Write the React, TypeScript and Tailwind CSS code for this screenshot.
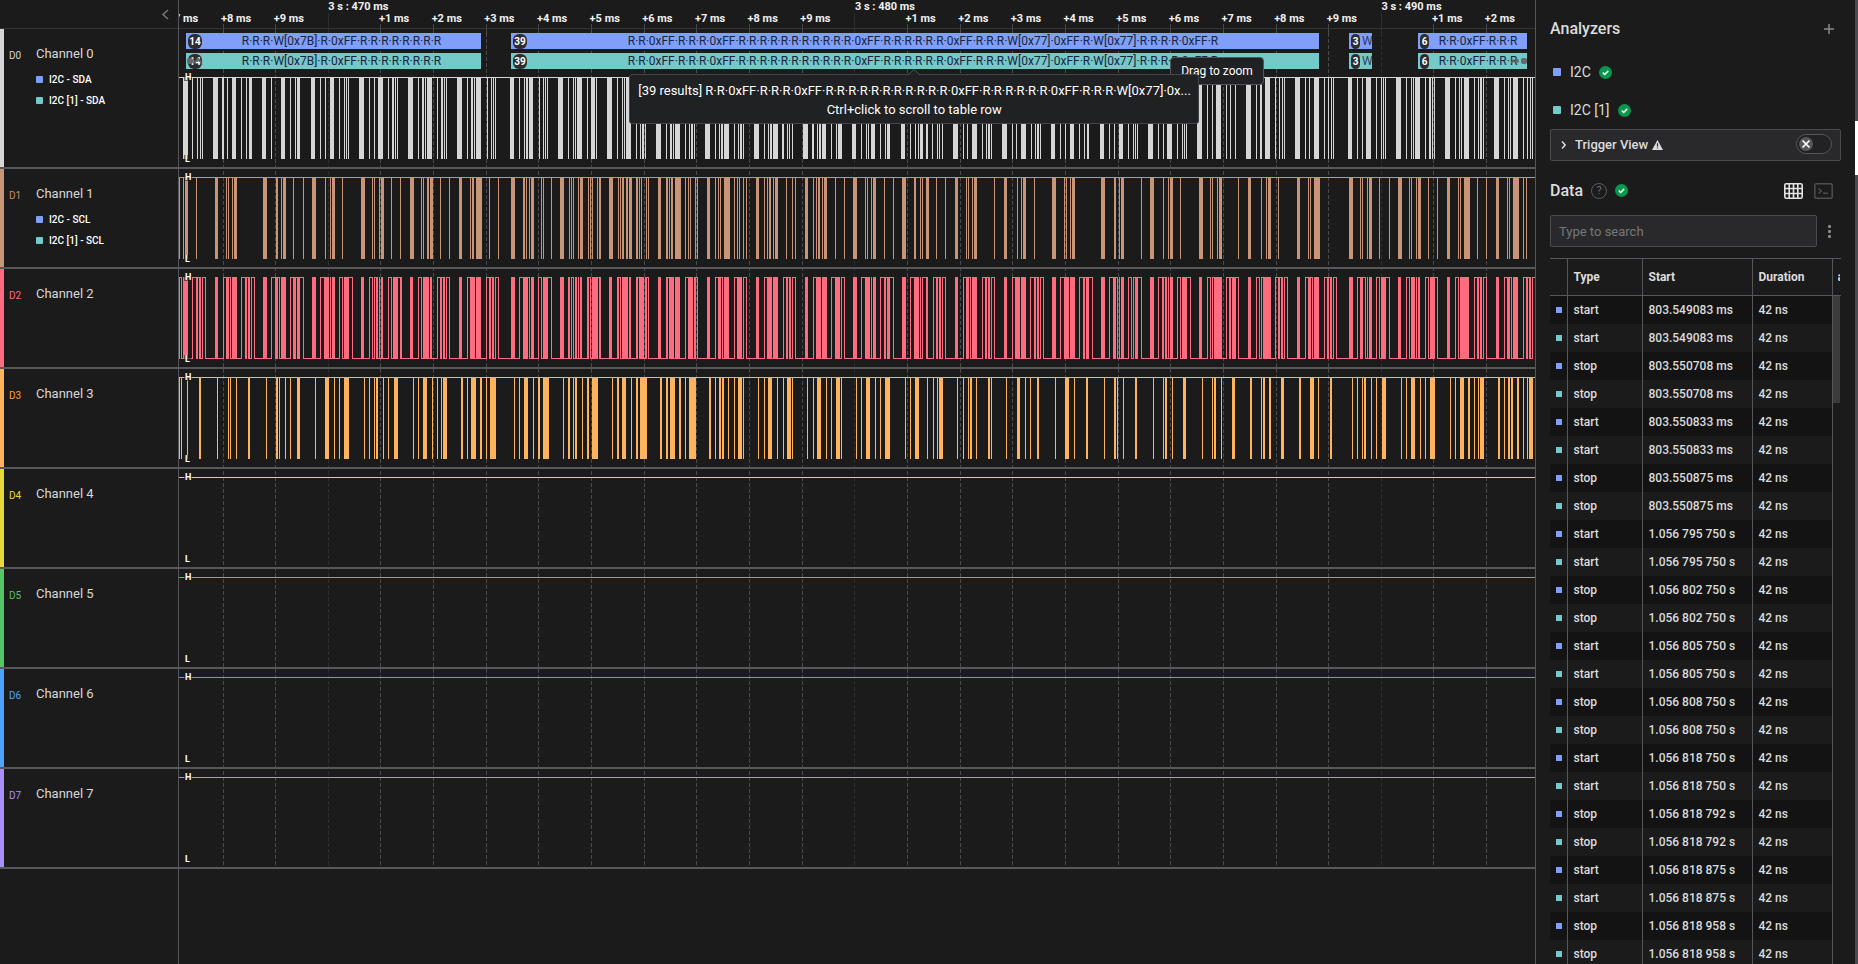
import { Fragment } from "react";
import clsx from "clsx";

// Transitions: "x" is a one pixel edge, "x*w" a burst of w pixels.
// A trailing "H" means the line stays high until the next one.
const ORIGIN = 179;
const SPAN = 1356;

const D0 =
    "183*5 192 197 200 202 213*5 222*2 227 232*4 241 246 249*3 262*4 271 281*4 290 295 297*3 311*4 320 325 330*4 339 344 346 348 359*5 369 374 378*5 388 392*2 395 397 408*5 418 422*2 425 427*5 437 441*2 444 446 457*5 467 471*2 474 476*5 487 491 493 495 510*4 519 524 526*2 529*4 539 543 545 547 558*5 568 573 575 577*5 587 591*4 596 607*5 617 622 624 626*5 636 640 642*2 645 656*5 666 670*2 673 675*5 685 689 691*2 694 705*5 715 719 721*2 724*5 734 738 740*2 743 754*5 764 768 770*2 773*5 782*2 787 789 792 803*5 812*2 817 819*2 822*4 831 836 838*4 852*4 861 866 868 871*4 880 885 887*3 901*4 910 915 918 920*3 926*2 932 937 939 942 953*5 963 967 972*5 982 986 988*2 991 1002*5 1012 1016 1021*5 1031 1035 1037*2 1040 1051*4 1060 1065 1070*4 1079 1084 1087*2 1100*4 1109 1114 1119*4 1128 1133 1135 1137 1148*5 1158 1163 1167*5 1177 1182 1184 1186 1197*5 1207 1212 1216*5 1226 1230 1235 1246*5 1256 1260*2 1265*5 1275 1279 1282 1284 1295*5 1305 1309 1314*5 1324 1328 1331 1333 1348*4 1357 1362 1366*5 1376 1381 1383 1385 1396*5 1406 1411 1413 1415*5 1425 1429*2 1432 1434 1445*5 1455 1459 1461 1464*5 1474 1478 1480*2 1483 1494*5 1504 1508 1510 1513*5 1523 1527 1530 1532";
const D1 =
    "179 183 185*3 196 215*3 226 228 232 234*3 263*4 276*2 281 283*3 293 303 312*4 325 330 332*3 342 361*4 372 374 379 381*3 391 400 410*4 421 423 427*2 430*3 440 449 459*3 470 472*2 476*6 489 498 511*4 523*2 526 529 531*3 541 543 551 560*4 569 571 573 578 580*3 588 590 592 597 599*2 609*4 618 620 622*2 626*2 629*3 636*2 639 641 646 648 658*3 666*2 669 671*2 675*6 685 688 690 695 697 707*3 715 718 720 724*6 734 737 739 743 746 756*3 764 767 769*2 773 775*3 786 792 795 805*3 813 816 818*2 822 824*3 835 844 853*4 865 867 871 873*3 884 893 902*4 914*2 920 922 926*3 936 945 955*3 966 968 972 974*3 994 1004*3 1017 1021 1023*3 1034 1052*4 1064 1066 1070 1072*3 1101*4 1114*2 1119 1121*3 1141 1150*4 1163 1168 1170*3 1180 1199*4 1210 1212 1217 1219*3 1238 1248*3 1261 1266 1268*3 1278 1297*3 1308 1310 1314*6 1349*4 1360 1362 1367 1369*3 1379 1389 1398*4 1409 1411 1416 1418*3 1428 1437 1447*3 1458 1460 1464*6 1477 1486 1496*3 1507 1509 1513*6 1523 1526";
const D2 =
    "179H 181 183*5 192H 196*2H 199*2 202H 205 215*3 223H 226*3H 230 232*5 241H 245*2H 248*2 251H 254 263*4 271H 275*3H 279 281*5 290H 293*3H 297*3H 303 312*4 320H 324*5 330 332*3 339H 342 344*5H 352 361*3 369H 372 374H 376*2 379 381*2 388H 391 393*5H 400*2 410*3 418H 421 423*6 430*2 437H 440*2H 443*2 446H 449 459*3 467H 470*5 476*5 486H 489*2H 492*2 495H 498 511*4 519H 523*5H 529 531*3 538H 541 543*5H 551 560*4 568*2 571H 573 575*2 578 580*2 587*2H 590 592*6H 599*2 609*3 617*2H 620 622*6 629*2 636*2H 639*5 645*2H 648 658*3 666*2H 669*5 675*5 685H 688*5 694*2H 697 707*3 715H 718*3H 722 724*5 734H 737*5 743H 746 756*3 764H 767*5 773*5 783H 786*2H 789*2 792H 795 805*3 813H 816*5 822*5 831H 835*5 841H 844 853*4 861H 865*5 871 873*3 880H 884*2H 887*3H 893 902*4 910H 914*5 920 922H 926*2 933H 936*2H 939*2 942H 945 955*3 963H 966*3H 970 972*5 982H 985*2H 988*2 991H 994 1004*3 1012H 1015*5 1021*5 1030H 1034*2H 1037*2 1040H 1043 1052*4 1060H 1064*5 1070*5 1079H 1083*2H 1086*3H 1092 1101*4 1109H 1113*3H 1117 1119 1121*3 1128H 1131 1133H 1135*3H 1141 1150*4 1158H 1162*2H 1165*2 1168 1170*3 1177H 1180 1182*5H 1190 1199*3 1207H 1210 1212H 1214*8 1226H 1229*2H 1232*4H 1238 1248*3 1256H 1259 1261H 1263*8 1275H 1278*2H 1281*2 1284H 1287 1297*3 1305H 1308*3H 1312 1314*5 1324H 1327*2H 1330*2 1333H 1336 1349*4 1357H 1360*3H 1365 1367 1369*3 1376H 1379 1381*5H 1389 1398*3 1406H 1409 1411*4 1416 1418*2 1425H 1428 1430*5H 1437 1447*3 1455H 1458 1460*9 1474H 1477*2H 1480*2 1483H 1486 1496*3 1504H 1507*3H 1511 1513*5 1523H 1526*2H 1529*2 1532H";
const D3 =
    "179 181 187 199*2 217 228 230 236 248*2 266 276*2 279 285 290 297*3 315 325*4 334 339 344*5 364 369 374 376*2 383 388 394*4 413 418 423*4 432 437 441 443*4 461*2 467 471*5 480*2 486 490*6 514 519 524*4 533 538*2 543*6 563 568*2 573 575*2 582 587*2 592*6 612 617*2 622*4 631 636*2 640*7 660*2 666*2 670*5 679*2 685 689*7 709*2 715 719*2 722*2 728 734 738*4 743 758 764 768*4 777 783 787*4 792 807 813 817*4 826 831 836*4 841 856 861 866*4 875 880 885*5 905 910 915*4 927 933 937 939*4 957 963 968 970*2 976 988*2 991 1006 1017*3 1025 1030 1037*2 1055 1065*4 1074 1086*2 1104 1114*2 1117 1123 1135*2 1153 1163 1165*2 1172 1183*3 1202 1212 1214*2 1221 1232*3 1250*2 1261 1263*2 1269*2 1281*3 1299*2 1310*4 1318 1330*2 1352 1357 1362 1364*2 1371 1376 1382*4 1401 1406 1411*4 1420 1425 1430*5 1450 1455 1460*4 1468*2 1474 1478 1480*4 1498*2 1504 1508*2 1511*2 1517*2 1523 1527 1529*4";

const BLUE = "bg-[#7f9ff9]";
const TEAL = "bg-[#74c9c9]";

const channels = [
    { color: "#d6d6d6", bar: "bg-[#d6d6d6]", text: "text-[#d6d6d6]", data: D0, tags: ["I2C - SDA", "I2C [1] - SDA"] },
    { color: "#c99579", bar: "bg-[#c99579]", text: "text-[#c98b66]", data: D1, tags: ["I2C - SCL", "I2C [1] - SCL"] },
    { color: "#ff6b7f", bar: "bg-[#ff6b7f]", text: "text-[#ff6b7f]", data: D2, idleLow: true },
    { color: "#ffb35c", bar: "bg-[#ffb35c]", text: "text-[#ff9d3c]", data: D3 },
    { color: "#e6da3a", bar: "bg-[#e6da3a]", text: "text-[#e6da3a]" },
    { color: "#56c568", bar: "bg-[#56c568]", text: "text-[#56c568]" },
    { color: "#4fa3ff", bar: "bg-[#4fa3ff]", text: "text-[#4fa3ff]" },
    { color: "#a98ffa", bar: "bg-[#a98ffa]", text: "text-[#a98ffa]" },
];

const TICK_START = 44;
const TICK_STEP = 52.65;
const ticks = Array.from({ length: 25 }, (_, i) => ({
    x: TICK_START + i * TICK_STEP,
    digit: (8 + i) % 10,
    major: (8 + i) % 10 === 0,
    label: `3 s : ${460 + Math.floor((8 + i) / 10) * 10} ms`,
}));

const repeat = (n: number) => Array(n).fill("R").join("·");
const LONG_HEAD = `R·R·0xFF·R·R·R·0xFF·${repeat(11)}·0xFF·${repeat(6)}·0xFF·R·R·R·W[0x77]·0x`;

const bubbles = [
    { gap: 7, width: 295, count: 14, text: `R·R·R·W[0x7B]·R·0xFF·${repeat(8)}` },
    { gap: 30, width: 808, count: 39, text: `${LONG_HEAD}FF·R·W[0x77]·R·R·R·R·0xFF·R` },
    { gap: 30, width: 23, count: 3, text: "W[0x77]", clipped: true },
    { gap: 46, width: 109, count: 6, text: "R·R·0xFF·R·R·R" },
];

const results: [string, string][] = [
    ["start", "803.549083 ms"],
    ["stop", "803.550708 ms"],
    ["start", "803.550833 ms"],
    ["stop", "803.550875 ms"],
    ["start", "1.056 795 750 s"],
    ["stop", "1.056 802 750 s"],
    ["start", "1.056 805 750 s"],
    ["stop", "1.056 808 750 s"],
    ["start", "1.056 818 750 s"],
    ["stop", "1.056 818 792 s"],
    ["start", "1.056 818 875 s"],
    ["stop", "1.056 818 958 s"],
];

const parseEdges = (data: string) =>
    data.split(" ").map((token) => {
        const [x, w] = token.replace("H", "").split("*");
        return { x: Number(x) - ORIGIN, w: Number(w ?? 1), high: token.endsWith("H") };
    });

const Waveform = ({ data, color, idleLow }: { data?: string; color: string; idleLow?: boolean }) => {
    const edges = data ? parseEdges(data) : [];
    return (
        <svg
            className="block w-full h-[82px]"
            viewBox={`0 0 ${SPAN} 82`}
            preserveAspectRatio="none"
            shapeRendering="crispEdges"
            fill={color}
            aria-hidden="true"
        >
            {!idleLow && <rect x={0} y={0} width={SPAN} height={1} />}
            {edges.map((edge, i) => {
                const end = edge.x + edge.w;
                const next = edges[i + 1]?.x ?? SPAN;
                return (
                    <Fragment key={edge.x}>
                        <rect x={edge.x} y={0} width={edge.w} height={82} />
                        {idleLow && <rect x={end} y={edge.high ? 0 : 81} width={next - end} height={1} />}
                    </Fragment>
                );
            })}
        </svg>
    );
};

const Grid = () => (
    <svg
        className="absolute inset-0 w-full h-full"
        viewBox={`0 0 ${SPAN} 869`}
        preserveAspectRatio="none"
        shapeRendering="crispEdges"
        aria-hidden="true"
    >
        {ticks.map(({ x, major }) => (
            <Fragment key={x}>
                <line x1={x} x2={x} y1={major ? 13 : 24} y2={33} stroke={major ? "#2e2e32" : "#4a4a4e"} />
                <line
                    x1={x}
                    x2={x}
                    y1={33}
                    y2={869}
                    stroke={major ? "#2e2e32" : "#4a4a4e"}
                    strokeDasharray="4 2"
                />
            </Fragment>
        ))}
    </svg>
);

const Ruler = () => (
    <div className="flex h-[29px] overflow-hidden border-b border-[#343438] text-[11px] leading-3 font-bold text-[#f0f0f0]">
        <div className="flex items-end justify-end overflow-hidden pb-[3px]" style={{ flex: `${TICK_START} 1 0px` }}>
            <span className="w-[55px] shrink-0 whitespace-nowrap">+7 ms</span>
        </div>
        {ticks.map(({ x, digit, major, label }) => (
            <div
                key={x}
                className={clsx("flex min-w-0 whitespace-nowrap", major ? "items-start pt-px" : "items-end pb-[3px]")}
                style={{ flex: `${Math.min(TICK_STEP, SPAN - x)} 1 0px` }}
            >
                <span className={major ? "" : "-ml-[2px]"}>{major ? label : `+${digit} ms`}</span>
            </div>
        ))}
    </div>
);

const BubbleRow = ({ tone }: { tone: string }) => (
    <div className="flex h-4 text-[12px] leading-4 text-[#1c2440]">
        {bubbles.map(({ gap, width, count, text, clipped }) => (
            <Fragment key={count}>
                <div style={{ flex: `${gap} 1 0px` }} />
                <div
                    className={clsx("flex min-w-0 items-center overflow-hidden", tone)}
                    style={{ flex: `${width} 1 0px` }}
                >
                    <span
                        className={clsx(
                            "ml-[2px] shrink-0 rounded-[6px] bg-[#2d2d31] text-center text-[10px] leading-[15px] font-bold text-white",
                            count > 9 ? "w-[14px]" : "w-[9px]",
                        )}
                    >
                        {count}
                    </span>
                    <span className={clsx("min-w-0 flex-1 whitespace-nowrap", clipped ? "pl-[2px] opacity-80" : "text-center")}>
                        {text}
                    </span>
                </div>
            </Fragment>
        ))}
        <div style={{ flex: "8 1 0px" }} />
    </div>
);

const StatusCheck = () => (
    <svg className="size-[13px]" viewBox="0 0 13 13" role="img" aria-label="Ready">
        <circle cx="6.5" cy="6.5" r="6.5" fill="#06984c" />
        <path d="M3.8 6.7l1.9 1.8 3.5-3.6" fill="none" stroke="#fff" strokeWidth="1.6" />
    </svg>
);

const Tooltips = () => (
    <>
        <div
            role="tooltip"
            className="absolute top-[57px] left-[73.1%] rounded-sm border border-[#55555b] bg-[#202123] px-[10px] py-[4px] text-[12px] leading-[18px] whitespace-nowrap text-white"
        >
            Drag to zoom
        </div>
        <div
            role="tooltip"
            className="absolute top-[74px] left-[33.2%] w-[570px] rounded-[3px] border border-[#45464b] bg-[#202123] px-2 pt-[6px] pb-[4px] text-center text-[13px] leading-[19px] text-white"
        >
            <svg className="absolute -top-[6px] left-[278px] h-[6px] w-3" viewBox="0 0 12 6" aria-hidden="true">
                <path d="M0 6L6 0.5 12 6" fill="#202123" stroke="#55555b" />
            </svg>
            <p className="whitespace-nowrap">[39 results] {LONG_HEAD}...</p>
            <p>Ctrl+click to scroll to table row</p>
        </div>
    </>
);

const ChannelPanel = () => (
    <aside className="w-[179px] shrink-0 border-r border-[#55555b]">
        <div className="flex h-[29px] items-center justify-end border-b border-[#343438] pr-2">
            <button type="button" aria-label="Collapse channel panel" className="text-[#77777b]">
                <svg className="h-[11px] w-[9px]" viewBox="0 0 9 11" fill="none" stroke="currentColor" strokeWidth="1.5">
                    <path d="M7 1L2 5.5 7 10" />
                </svg>
            </button>
        </div>
        {channels.map(({ bar, text, tags }, i) => (
            <div
                key={bar}
                className={clsx("flex border-b-2 border-[#57575c]", i === 0 ? "h-[140px]" : "h-[100px]")}
            >
                <div className={clsx("w-1 shrink-0", bar)} />
                <div className={clsx("w-8 shrink-0 pt-5 pl-[5px] text-[10px] leading-[14px]", text)}>D{i}</div>
                <div className="pt-4 text-[#d8d8d8]">
                    <h3 className="text-[13px] leading-[18px]">Channel {i}</h3>
                    <ul className="pt-[6px]">
                        {tags?.map((tag, t) => (
                            <li key={tag} className="flex h-[21px] items-center gap-[6px] text-[10px] font-medium text-white">
                                <span className={clsx("size-[7px] rounded-[1px]", t ? TEAL : BLUE)} />
                                {tag}
                            </li>
                        ))}
                    </ul>
                </div>
            </div>
        ))}
    </aside>
);

const Level = ({ children }: { children: string }) => (
    <span className="bg-[#1b1b1b]/60 px-px text-[9px] leading-[8px] font-bold text-white">{children}</span>
);

const Plot = () => (
    <main className="relative min-w-0 flex-1">
        <div className="absolute inset-x-0 top-0 h-[869px]">
            <Grid />
        </div>
        <div className="relative">
            <Ruler />
            {channels.map(({ color, data, idleLow }, i) => (
                <section
                    key={color}
                    aria-label={`Channel ${i} waveform`}
                    className={clsx("relative border-b-2 border-[#57575c]", i === 0 ? "h-[140px] pt-1" : "h-[100px] pt-2")}
                >
                    {i === 0 && (
                        <div className="mb-2 flex flex-col gap-1">
                            <BubbleRow tone={BLUE} />
                            <BubbleRow tone={TEAL} />
                        </div>
                    )}
                    <Waveform data={data} color={color} idleLow={idleLow} />
                    <div className="absolute bottom-1 left-[5px] flex h-[90px] flex-col items-start justify-between">
                        <Level>H</Level>
                        <Level>L</Level>
                    </div>
                </section>
            ))}
        </div>
        <svg className="absolute top-[57px] left-2 h-2 w-4" viewBox="0 0 16 8" aria-hidden="true">
            <rect x="0" y="1" width="6" height="6" rx="2" fill="#66686b" />
            <path d="M7 6l4-4 4 4" fill="none" stroke="#6b5b60" strokeWidth="2" />
        </svg>
        <svg className="absolute top-[57px] right-2 h-2 w-4" viewBox="0 0 16 8" aria-hidden="true">
            <rect x="10" y="1" width="6" height="6" rx="2" fill="#66686b" />
            <rect x="4" y="2" width="4" height="4" rx="2" fill="#66686b" />
            <path d="M0 6l3-3" fill="none" stroke="#6b5b60" strokeWidth="2" />
        </svg>
        <Tooltips />
    </main>
);

const Sidebar = () => (
    <aside className="flex w-[323px] shrink-0 border-l border-[#55555b] text-[#dcdcdc]">
        <div className="min-w-0 flex-1 pl-[14px]">
            <div className="flex h-[56px] items-center justify-between pt-px pr-[7px]">
                <h2 className="text-[16px] font-medium">Analyzers</h2>
                <button type="button" aria-label="Add analyzer" className="text-[#8a8a8e]">
                    <svg className="block size-[10px]" viewBox="0 0 10 10" fill="none" stroke="currentColor" strokeWidth="1.5">
                        <path d="M5 0v10M0 5h10" />
                    </svg>
                </button>
            </div>
            {["I2C", "I2C [1]"].map((name, i) => (
                <div key={name} className="flex h-[38px] items-center pb-[6px] pl-[3px] text-[14px]">
                    <span className={clsx("mr-[9px] size-2 rounded-[1px]", i ? TEAL : BLUE)} />
                    <span className="mr-2">{name}</span>
                    <StatusCheck />
                </div>
            ))}
            <div className="-mt-[3px] flex h-8 items-center rounded-[2px] border border-[#4a4a50] bg-[#29292b] pr-2 pl-[10px]">
                <button type="button" className="flex items-center text-[13px] font-medium">
                    <svg className="mr-[9px] h-2 w-[5px]" viewBox="0 0 5 8" fill="none" stroke="currentColor" strokeWidth="1.5">
                        <path d="M1 0.5L4.2 4 1 7.5" />
                    </svg>
                    Trigger View
                    <svg className="ml-1 h-[10px] w-[11px]" viewBox="0 0 11 10" aria-hidden="true">
                        <path d="M5.5 0L11 10H0z" fill="#dcdcdc" />
                        <path d="M5.5 3.3v3.2M5.5 7.4v1.2" stroke="#29292b" strokeWidth="1.2" />
                    </svg>
                </button>
                <button
                    type="button"
                    role="switch"
                    aria-checked="false"
                    aria-label="Trigger view"
                    className="mb-[3px] ml-auto flex h-5 w-9 items-center rounded-full border border-[#55555b] bg-[#222224] pl-[2px]"
                >
                    <svg className="size-[14px]" viewBox="0 0 14 14">
                        <circle cx="7" cy="7" r="7" fill="#55555a" />
                        <path d="M3.5 3.5l7 7M10.5 3.5l-7 7" stroke="#fff" strokeWidth="1.7" />
                    </svg>
                </button>
            </div>
            <div className="flex h-[54px] items-center pt-[5px]">
                <h2 className="mr-2 text-[16px] font-medium">Data</h2>
                <button
                    type="button"
                    aria-label="Help"
                    className="mr-2 flex size-4 items-center justify-center rounded-full border border-[#5a5a5f] text-[11px] leading-none text-[#6d6d72]"
                >
                    ?
                </button>
                <StatusCheck />
                <div className="ml-auto flex gap-[11px] pr-2">
                    <button type="button" aria-label="Table view">
                        <svg className="block h-4 w-[19px]" viewBox="0 0 19 16" fill="none" stroke="#e4e4e4" strokeWidth="1.6">
                            <rect x="0.8" y="0.8" width="17.4" height="14.4" rx="1.5" />
                            <path d="M5.2 1v14M9.5 1v14M13.8 1v14M1 5.5h17M1 10.5h17" />
                        </svg>
                    </button>
                    <button type="button" aria-label="Terminal view">
                        <svg className="block h-4 w-[19px]" viewBox="0 0 19 16" fill="none" stroke="#4e4e53" strokeWidth="1.5">
                            <rect x="0.8" y="0.8" width="17.4" height="14.4" rx="1.5" />
                            <path d="M4.5 5.5L7.2 8l-2.7 2.5M9 10.2h5" />
                        </svg>
                    </button>
                </div>
            </div>
            <div className="flex items-center">
                <input
                    type="search"
                    aria-label="Type to search"
                    placeholder="Type to search"
                    className="h-8 w-[267px] rounded-[2px] border border-[#4a4a50] bg-[#29292b] px-2 text-[13px] outline-none placeholder:text-[#77777b]"
                />
                <button type="button" aria-label="Table options" className="ml-[11px] text-[#8a8a8e]">
                    <svg className="block h-[14px] w-[3px]" viewBox="0 0 3 14" fill="currentColor">
                        <rect y="1" width="3" height="3" rx="1" />
                        <rect y="6" width="3" height="3" rx="1" />
                        <rect y="11" width="3" height="3" rx="1" />
                    </svg>
                </button>
            </div>
            <div className="mt-[11px] flex overflow-hidden">
                <table className="w-full table-fixed border-collapse text-left text-[12px] font-medium">
                    <thead>
                        <tr className="h-[37px] border-y border-[#55555b]">
                            <th className="w-[17px]" aria-label="Analyzer" />
                            <th className="w-[75px] border-l border-[#55555b] pl-[6px] font-bold">Type</th>
                            <th className="w-[110px] border-l border-[#55555b] pl-[6px] font-bold">Start</th>
                            <th className="w-[80px] border-l border-[#55555b] pl-[6px] font-bold">Duration</th>
                            <th className="overflow-hidden border-l border-[#55555b] pl-[5px] font-bold">
                                <span className="block w-[2px] overflow-hidden">a</span>
                            </th>
                        </tr>
                    </thead>
                    <tbody>
                        {results.flatMap(([type, start], i) =>
                            [BLUE, TEAL].map((tone) => (
                                <tr key={`${i}-${tone}`} className={clsx("h-7", tone === BLUE && "bg-[#131313]")}>
                                    <td className="pl-[6px]">
                                        <span className={clsx("block size-[6px]", tone)} />
                                    </td>
                                    <td className="border-l border-[#55555b] pl-[6px]">{type}</td>
                                    <td className="border-l border-[#55555b] pl-[6px]">{start}</td>
                                    <td className="border-l border-[#55555b] pl-[6px]">42 ns</td>
                                    {i === 0 && tone === BLUE && (
                                        <td rowSpan={results.length * 2} className="border-l border-[#55555b] bg-[#1b1b1b] align-top">
                                            <div className="h-[107px] w-[7px] bg-[#3c3c3c]" />
                                        </td>
                                    )}
                                </tr>
                            )),
                        )}
                    </tbody>
                </table>
            </div>
        </div>
        <div className="ml-[14px] w-[3px] bg-[#4b4b4f] pt-[121px]">
            <div className="h-[54px] bg-white" />
        </div>
    </aside>
);

const App = () => (
    <div className="flex h-screen overflow-hidden bg-[#1b1b1b] font-[Roboto,sans-serif]">
        <ChannelPanel />
        <Plot />
        <Sidebar />
    </div>
);

export default App;
